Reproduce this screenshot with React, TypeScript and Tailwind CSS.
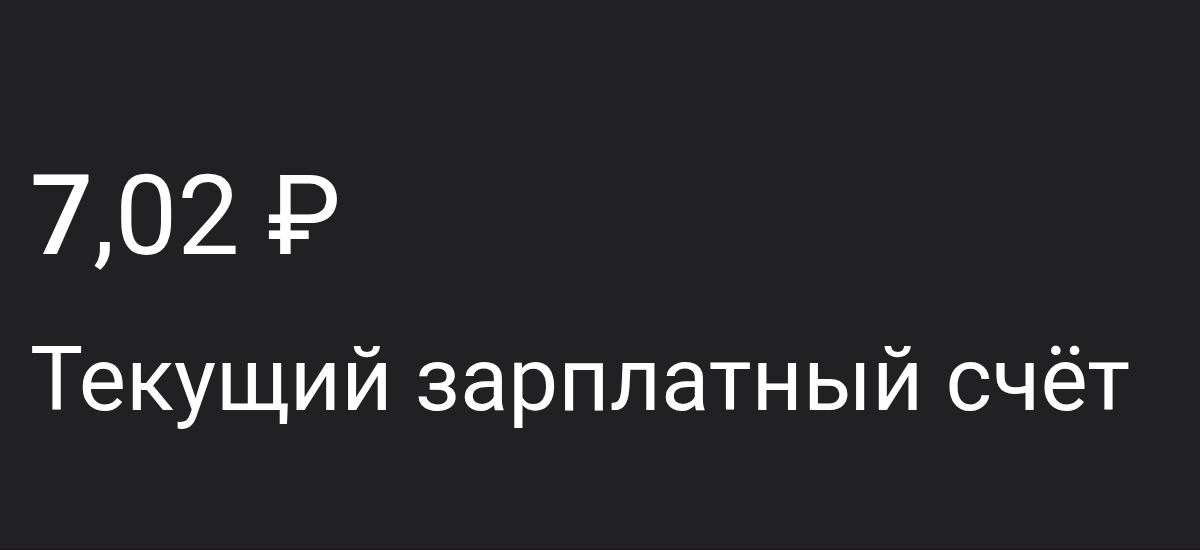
const account = {
  rubles: '7',
  kopecks: '02',
  currency: '₽',
  name: 'Текущий зарплатный счёт',
};

export default function App() {
  return (
    <main className="min-h-screen bg-[#212123] border-b border-[#1b1719] px-[30px] pt-40 font-['Roboto',sans-serif] text-white">
      {/* Balance */}
      <p className="text-[111px] leading-[112px]">
        <span className="font-medium">{account.rubles}</span>,{account.kopecks} {account.currency}
      </p>

      {/* Account name */}
      <h1 className="mt-16 text-[89px] leading-[88px]">{account.name}</h1>
    </main>
  );
}
